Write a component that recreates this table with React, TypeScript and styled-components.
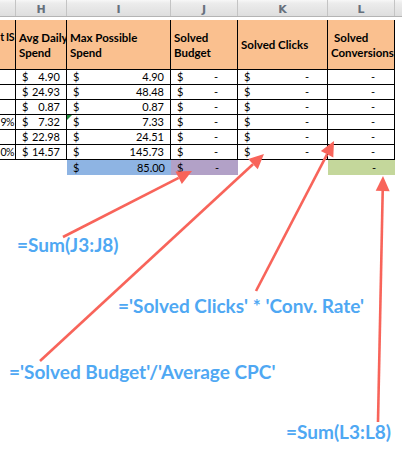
import React from 'react';
import styled, { createGlobalStyle, css } from 'styled-components';

const GlobalStyle = createGlobalStyle`
  html, body {
    margin: 0;
    padding: 0;
    background: #fff;
  }
  body {
    font-family: Lato, "Liberation Sans", sans-serif;
    color: #000;
  }
`;

const COLUMNS = '16px 51px 104px 67px 90px 67px 7px';
const ARROW = '#f8645a';
const NOTE = '#4fa8f3';

const Page = styled.div`
  position: relative;
  width: 402px;
  height: 453px;
  overflow: hidden;
  background: #fff;
`;

/**
 * Spreadsheet
 *
 */
const Sheet = styled.div`
  display: flex;
  flex-direction: column;
`;

const Row = styled.div<{ $height: number }>`
  display: grid;
  grid-template-columns: ${COLUMNS};
  height: ${(p) => p.$height}px;
`;

const LetterRow = styled(Row)`
  background: linear-gradient(#f7f7f7 0%, #ececec 20%, #dedede 100%);
  border-bottom: 1px solid #b4b4b4;
  box-sizing: border-box;
`;

const Letter = styled.div`
  display: flex;
  align-items: center;
  justify-content: center;
  border-right: 1px solid #c4c4c4;
  padding-top: 2px;
  font-family: "DejaVu Sans", sans-serif;
  font-size: 11px;
  font-weight: bold;
  color: #66707c;

  &:last-child {
    border-right: none;
  }
`;

const Gap = styled.div`
  height: 3px;
`;

const HeadCell = styled.div`
  display: flex;
  align-items: center;
  box-sizing: border-box;
  padding-left: 3px;
  white-space: nowrap;
  overflow: hidden;
  font-size: 11.5px;
  font-weight: bold;
  line-height: 15px;
  background: #fac08f;
  border-right: 1px solid #000;
  border-bottom: 1px solid #000;
`;

const Indent = styled.span`
  padding-left: 3px;
`;

const LostHead = styled(HeadCell)`
  align-items: flex-start;
  justify-content: flex-end;
  padding: 10px 1px 0 0;
  font-size: 10.5px;
  letter-spacing: -0.4px;
`;

const BodyCell = styled.div<{ $flag?: boolean }>`
  position: relative;
  display: flex;
  align-items: center;
  justify-content: space-between;
  box-sizing: border-box;
  padding: 0 6px 1px 6px;
  font-size: 11px;
  border-right: 1px solid #000;
  border-bottom: 1px solid #000;
  white-space: nowrap;

  ${(p) =>
    p.$flag &&
    css`
      &::before {
        content: '';
        position: absolute;
        left: 0;
        top: 0;
        border-top: 5px solid #1f8a3a;
        border-right: 5px solid transparent;
      }
    `}
`;

const LostCell = styled(BodyCell)`
  justify-content: flex-end;
  padding: 0 1px 1px 0;
  font-size: 10.5px;
  letter-spacing: -0.5px;
`;

const DashCell = styled(BodyCell)<{ $pad: number }>`
  padding-right: ${(p) => p.$pad}px;
`;

const Blank = styled.div``;

const TONES = {
  blue: '#8eb4e3',
  purple: '#b2a1c7',
  green: '#c4d79b',
};

const TotalCell = styled.div<{ $tone: keyof typeof TONES; $pad: number }>`
  display: flex;
  align-items: center;
  justify-content: space-between;
  box-sizing: border-box;
  padding: 0 ${(p) => p.$pad}px 0 6px;
  font-size: 11px;
  background: ${(p) => TONES[p.$tone]};
  white-space: nowrap;
`;

const Dash = styled.span`
  margin-left: auto;
`;

/**
 * Annotations
 *
 */
const Arrows = styled.svg`
  position: absolute;
  top: 0;
  left: 0;
  pointer-events: none;
`;

const Note = styled.div<{ $x: number; $y: number }>`
  position: absolute;
  left: ${(p) => p.$x}px;
  top: ${(p) => p.$y}px;
  font-family: Lato, "Open Sans", sans-serif;
  font-size: 19px;
  font-weight: bold;
  line-height: 22px;
  color: ${NOTE};
  white-space: nowrap;
`;

interface SpendRow {
  lost: string;
  avg: string;
  max: string;
  flag?: boolean;
}

const rows: SpendRow[] = [
  { lost: '', avg: '4.90', max: '4.90' },
  { lost: '', avg: '24.93', max: '48.48' },
  { lost: '', avg: '0.87', max: '0.87' },
  { lost: '9%', avg: '7.32', max: '7.33', flag: true },
  { lost: '', avg: '22.98', max: '24.51' },
  { lost: '0%', avg: '14.57', max: '145.73' },
];

const arrows = [
  { x1: 63, y1: 237, x2: 192, y2: 171 },
  { x1: 40, y1: 361, x2: 264, y2: 154 },
  { x1: 256, y1: 291, x2: 334, y2: 141 },
  { x1: 378, y1: 422, x2: 383, y2: 176 },
];

const arrowParts = (x1: number, y1: number, x2: number, y2: number) => {
  const len = 15;
  const half = 7;
  const d = Math.hypot(x2 - x1, y2 - y1);
  const ux = (x2 - x1) / d;
  const uy = (y2 - y1) / d;
  const bx = x2 - ux * len;
  const by = y2 - uy * len;
  const head = `${x2},${y2} ${bx - uy * half},${by + ux * half} ${bx + uy * half},${by - ux * half}`;
  return { bx, by, head };
};

const App: React.FC = () => {
  return (
    <Page>
      <GlobalStyle />
      <Sheet>
        <LetterRow $height={17}>
          {['', 'H', 'I', 'J', 'K', 'L', ''].map((l, i) => (
            <Letter key={i}>{l}</Letter>
          ))}
        </LetterRow>
        <Gap />
        <Row $height={50}>
          <LostHead>t IS</LostHead>
          <HeadCell>
            Avg Daily
            <br />
            Spend
          </HeadCell>
          <HeadCell>
            Max Possible
            <br />
            Spend
          </HeadCell>
          <HeadCell>
            Solved
            <br />
            Budget
          </HeadCell>
          <HeadCell>Solved Clicks</HeadCell>
          <HeadCell>
            <span>
              <Indent>Solved</Indent>
              <br />
              Conversions
            </span>
          </HeadCell>
          <Blank />
        </Row>
        {rows.map((r, i) => (
          <Row $height={15} key={i}>
            <LostCell>{r.lost}</LostCell>
            <BodyCell>
              <span>$</span>
              <span>{r.avg}</span>
            </BodyCell>
            <BodyCell $flag={r.flag}>
              <span>$</span>
              <span>{r.max}</span>
            </BodyCell>
            <DashCell $pad={19}>
              <span>$</span>
              <Dash>-</Dash>
            </DashCell>
            <DashCell $pad={18}>
              <span>$</span>
              <Dash>-</Dash>
            </DashCell>
            <DashCell $pad={19}>
              <Dash>-</Dash>
            </DashCell>
            <Blank />
          </Row>
        ))}
        <Row $height={15}>
          <Blank />
          <Blank />
          <TotalCell $tone="blue" $pad={6}>
            <span>$</span>
            <span>85.00</span>
          </TotalCell>
          <TotalCell $tone="purple" $pad={19}>
            <span>$</span>
            <Dash>-</Dash>
          </TotalCell>
          <Blank />
          <TotalCell $tone="green" $pad={19}>
            <Dash>-</Dash>
          </TotalCell>
          <Blank />
        </Row>
      </Sheet>

      <Note $x={17} $y={234}>=Sum(J3:J8)</Note>
      <Note $x={118} $y={295}>='Solved Clicks' * 'Conv. Rate'</Note>
      <Note $x={9} $y={361}>='Solved Budget'/'Average CPC'</Note>
      <Note $x={286} $y={421}>=Sum(L3:L8)</Note>

      <Arrows width={402} height={453} viewBox="0 0 402 453">
        {arrows.map((a, i) => {
          const { bx, by, head } = arrowParts(a.x1, a.y1, a.x2, a.y2);
          return (
            <g key={i}>
              <line
                x1={a.x1}
                y1={a.y1}
                x2={bx}
                y2={by}
                stroke={ARROW}
                strokeWidth={2.6}
              />
              <polygon points={head} fill={ARROW} />
            </g>
          );
        })}
      </Arrows>
    </Page>
  );
};

export default App;
